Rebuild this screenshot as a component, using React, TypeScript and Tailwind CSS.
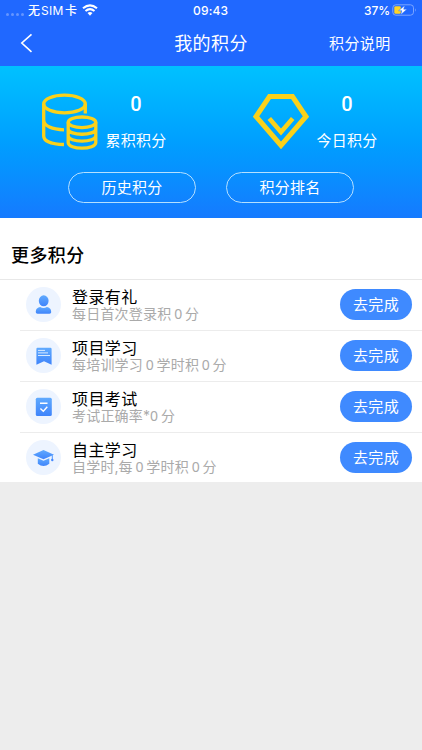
import type { ReactNode } from 'react';

function Zero({ narrow = false }: { narrow?: boolean }) {
  return <span className={narrow ? "inline-block w-[11px] text-left font-['Noto_Sans'] leading-[15px] tracking-normal" : "inline-block w-[13.5px] text-center font-['Noto_Sans'] leading-[15px] tracking-normal"}>0</span>;
}

function StatusBar() {
  return (
    <div className="flex h-5 items-center pl-[6px] text-[12px] leading-5 font-medium">
      <div className="mt-[8px] flex gap-[2px]">
        {[0, 1, 2, 3].map((n) => (
          <i key={n} className="size-[3px] rounded-full bg-[#6595ff]" />
        ))}
      </div>
      <div className="ml-[4px] flex w-[50px] pt-px whitespace-nowrap">
        <span>无</span>
        <span className="mx-[1px] w-[23px] font-normal tracking-[0.3px]">SIM</span>
        <span>卡</span>
      </div>
      <svg className="ml-[4px] h-[12px] w-[16px]" viewBox="0 0 16 12" fill="none" stroke="white">
        <path d="M1 4.3Q8-1.5 15 4.3" strokeWidth="2.1" />
        <path d="M3.5 7Q8 3.2 12.5 7" strokeWidth="2" />
        <path d="M5.5 9Q8 6.8 10.5 9L8 11.7Z" fill="white" stroke="none" />
      </svg>
      <span className="ml-[95px] w-[36px] pt-px tracking-[0.2px]">09:43</span>
      <span className="ml-auto pt-px text-[12px] tracking-[-0.1px]">37%</span>
      <svg className="mr-[4px] ml-[2px] h-[12px] w-[26px]" viewBox="0 0 26 12">
        <rect x=".8" y=".8" width="20.7" height="10.4" rx="3" fill="none" stroke="#7ba5ff" />
        <path d="M23.2 4.2Q25 6 23.2 7.8Z" fill="#7ba5ff" />
        <rect x="2.3" y="2.3" width="6.5" height="7.5" rx="1.3" fill="#ffd426" />
        <path d="M12.7 1.4L6.6 6.7h3.2L8.7 10.7 15 5.2h-3.3Z" fill="white" stroke="#2068ff" strokeWidth=".5" />
      </svg>
    </div>
  );
}

function CoinsIcon() {
  return (
    <svg className="size-[58px]" viewBox="0 0 58 58" fill="none" stroke="#fad11b" strokeWidth="3.3">
      <ellipse cx="23.5" cy="11" rx="20.8" ry="8.8" />
      <path d="M2.7 11V43C2.7 48 10 51.2 23 51.5M44.3 11V20.5M2.7 27C3 33 11 36.7 23 36.8" />
      <ellipse cx="41" cy="29.3" rx="13.8" ry="5.3" />
      <path d="M27.2 29.3V49.5C27.2 57 54.8 57 54.8 49.5V29.3M27.2 36C27.2 43 54.8 43 54.8 36M27.2 42.8C27.2 49.8 54.8 49.8 54.8 42.8" />
    </svg>
  );
}

function GemIcon() {
  return (
    <svg className="size-[58px]" viewBox="0 0 58 58" fill="none" stroke="#fad11b">
      <path d="M17.5 3.6H40.5L54 23.5 29 52.5 4 23.5Z" strokeWidth="5" />
      <path d="M17.3 25.5L29 39 40.7 25.5" strokeWidth="4.6" />
    </svg>
  );
}

function Stat({ icon, label }: { icon: ReactNode; label: string }) {
  return (
    <div className="flex w-[211px] pl-[41px]">
      <div className="mt-[27px] h-[58px]">{icon}</div>
      <div className="ml-[5px] w-[64px] pt-[27px] text-center">
        <div className="h-[22px] font-[Roboto] text-[20px] leading-[22px] font-medium">0</div>
        <div className="mt-[16px] text-[15px] leading-[20px] tracking-[0.3px] whitespace-nowrap">{label}</div>
      </div>
    </div>
  );
}

const icons = [
  <>
    <ellipse cx="17.7" cy="13.8" rx="4.9" ry="5.5" fill="url(#blue)" />
    <path d="M9.8 25.3C9.8 21.7 11.8 20.6 14.1 20.1Q17.5 22 20.9 20.1C23.2 20.6 25.2 21.7 25.2 25.3Q25.2 26.7 23.5 26.7H11.5Q9.8 26.7 9.8 25.3Z" fill="url(#blue)" />
  </>,
  <>
    <path d="M11.4 9.8H24.4Q25.6 9.8 25.6 11V26.8L18 23.2 10.4 26.8V11Q10.4 9.8 11.4 9.8Z" fill="url(#blue)" />
    <path d="M12 12.4H19M12 14.9H22M12 17.5H24" stroke="#d9eaff" strokeWidth="1" />
  </>,
  <>
    <rect x="9.8" y="8.8" width="16" height="18.2" rx="1.5" fill="url(#blue)" />
    <path d="M14 14.2H21.5M14.4 19.5L17.3 22.2 21.3 17.8" fill="none" stroke="white" strokeWidth="1.4" />
  </>,
  <>
    <path d="M7 14.8L17.5 10 28 14.8 17.5 19.2Z" fill="url(#blue)" />
    <path d="M11.8 18.2L17.5 20.8 23.3 18.2V23.8Q17.5 28.2 11.8 23.8Z" fill="url(#blue)" />
    <path d="M26.3 15.2V20" stroke="#4e98ff" />
    <circle cx="26.3" cy="20" r="1.2" fill="#4388ff" />
  </>,
];

const tasks = [
  { title: '登录有礼', detail: <>每日首次登录积<Zero />分</> },
  { title: '项目学习', detail: <>每培训学习<Zero />学时积<Zero />分</> },
  { title: '项目考试', detail: <>考试正确率<span className="inline-block w-[7px] leading-[15px] tracking-normal">*</span><Zero narrow />分</> },
  { title: '自主学习', detail: <>自学时<span className="inline-block w-[4px] leading-[15px] tracking-normal">,</span>每<Zero />学时积<Zero />分</> },
];

export default function App() {
  return (
    <main className="min-h-[750px] w-[422px] bg-[#ededed] font-[Inter,'Noto_Sans_CJK_SC',sans-serif] text-white">
      <svg className="absolute size-0">
        <linearGradient id="blue" x1="0" y1="0" x2="0" y2="1">
          <stop stopColor="#60aafe" />
          <stop offset="1" stopColor="#3f84fb" />
        </linearGradient>
      </svg>
      <header className="h-[66px] bg-[#2068ff]">
        <StatusBar />
        <div className="grid h-[46px] grid-cols-[120px_182px_120px] items-center">
          <svg className="ml-[20px] h-[20px] w-[13px]" viewBox="0 0 13 20" fill="none" stroke="white" strokeWidth="1.6">
            <path d="M11.5 1.3L1.8 10 11.5 18.8" />
          </svg>
          <h1 className="pt-[2px] text-center text-[18px] leading-[26px] font-normal tracking-[0.4px]">我的积分</h1>
          <span className="pt-[2px] pl-[27px] text-[15px] leading-[22px] tracking-[0.4px]">积分说明</span>
        </div>
      </header>
      <section className="h-[152px] bg-linear-to-b from-[#00c1ff] to-[#157aff]">
        <div className="flex h-[106px]">
          <Stat icon={<CoinsIcon />} label="累积积分" />
          <Stat icon={<GemIcon />} label="今日积分" />
        </div>
        <div className="flex gap-[30px] pl-[68px]">
          {['历史积分', '积分排名'].map((label) => (
            <button key={label} className="h-[31px] w-[128px] rounded-full border border-[#b5e0ff] text-[15px] leading-[29px] tracking-[0.3px]">{label}</button>
          ))}
        </div>
      </section>
      <section className="bg-white text-black">
        <h2 className="h-[61px] pt-[25px] pl-[11px] text-[18px] leading-[26px] font-medium tracking-[0.4px]">更多积分</h2>
        <div className="h-px bg-[#e8e8e8]" />
        {tasks.map((task, i) => (
          <div key={task.title} className="pl-[20px]">
            <div className={i === 3 ? 'flex h-[49px] items-start pt-[7px] pr-[10px] pl-[6px]' : 'flex h-[50px] items-start pt-[7px] pr-[10px] pl-[6px]'}>
              <svg className="size-[35px] shrink-0" viewBox="0 0 35 35">
                <circle cx="17.5" cy="17.5" r="17.5" fill="#edf4ff" />
                {icons[i]}
              </svg>
              <div className="ml-[11px] flex-1 pt-[2px] whitespace-nowrap">
                <div className="h-[17px] text-[16px] leading-[17px] tracking-[0.4px]">{task.title}</div>
                <div className="h-[17px] text-[14px] leading-[15px] tracking-[0.2px] text-[#aaa]">{task.detail}</div>
              </div>
              <button className="mt-[2px] h-[31px] w-[72px] rounded-full bg-[#3f8aff] text-[15px] leading-[31px] tracking-[0.3px] text-white">去完成</button>
            </div>
            {i < 3 && <div className="h-px bg-[#ececec]" />}
          </div>
        ))}
      </section>
    </main>
  );
}
